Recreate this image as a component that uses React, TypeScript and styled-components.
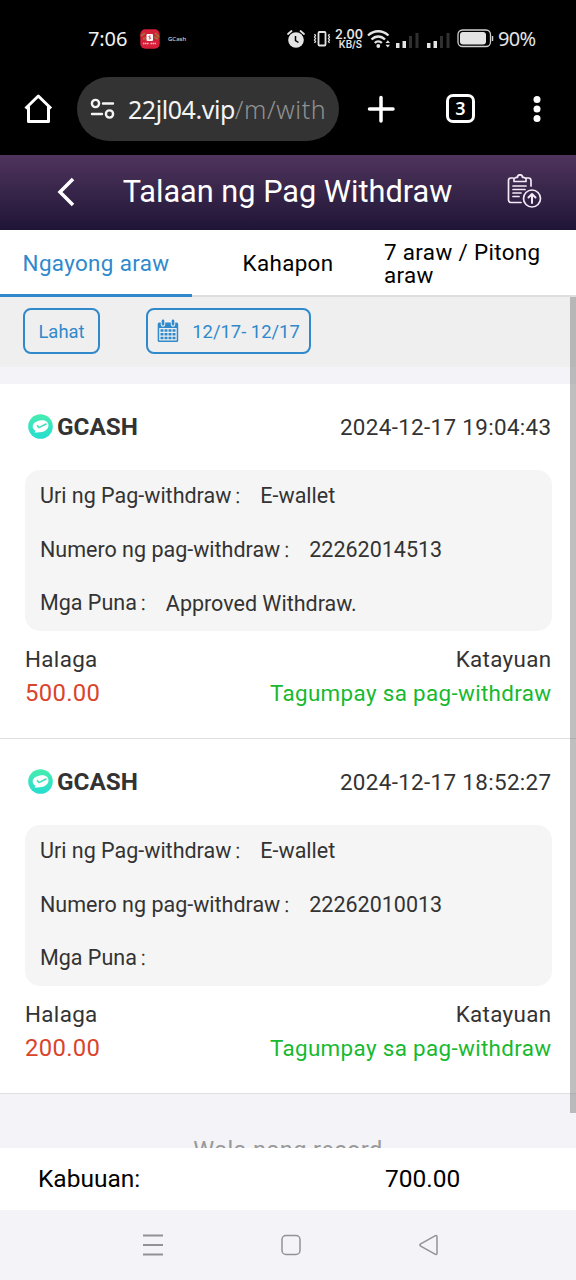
import React from "react";
import styled, { createGlobalStyle } from "styled-components";

const GlobalStyle = createGlobalStyle`
  * { box-sizing: border-box; }
  body {
    margin: 0;
    background: #f3f3f8;
    font-family: Roboto, "Noto Sans CJK SC", sans-serif;
  }
`;

const Screen = styled.div`
  width: 576px;
  height: 1280px;
  display: flex;
  flex-direction: column;
  overflow: hidden;
  white-space: nowrap;
`;

const Label = styled.span<{ $size: number; $track?: number; $color?: string; $weight?: number }>`
  font-size: ${(p) => p.$size}px;
  letter-spacing: ${(p) => p.$track ?? 0}px;
  color: ${(p) => p.$color ?? "#333"};
  font-weight: ${(p) => p.$weight ?? 400};
`;

/* System status bar */
const StatusBar = styled.div`
  height: 77px;
  flex: none;
  display: flex;
  align-items: center;
  padding: 0 40px 0 88px;
  background: #000;
  color: #e4e4e4;
  font-family: "Noto Sans", sans-serif;
`;

const Clock = styled.span`
  width: 52px;
  font-size: 20px;
  line-height: 24px;
  color: #f2f2f2;
  letter-spacing: -0.1px;
`;

const Notice = styled.span`
  margin-left: 8px;
  font-size: 6px;
  width: 118px;
`;

const VibrateIcon = styled.svg`
  margin-left: 7px;
`;

const Speed = styled.div`
  display: flex;
  flex-direction: column;
  align-items: flex-end;
  width: 31px;
  margin: 2px 4px 0 1px;
  font-family: Inter, sans-serif;
  font-weight: 600;
  font-size: 12.5px;
  line-height: 11px;
  span + span { font-size: 9.7px; line-height: 10px; margin-right: 1px; }
`;

const Signals = styled.div`
  display: flex;
  gap: 6px;
  margin: 2px 6px 0 4px;
`;

const Percent = styled.span`
  margin-left: 4px;
  font-size: 20px;
  line-height: 24px;
  letter-spacing: -0.7px;
`;

/* Browser toolbar */
const Toolbar = styled.div`
  height: 78px;
  flex: none;
  display: flex;
  align-items: flex-start;
  padding-left: 23px;
  background: #000;
  > svg { margin-top: 16px; }
`;

const Address = styled.div`
  width: 262px;
  height: 64px;
  margin: 0 26px 0 23px;
  padding: 0 12px 0 13px;
  border-radius: 32px;
  background: #333;
  display: flex;
  align-items: center;
  gap: 12px;
`;

const Url = styled.div`
  flex: 1;
  overflow: hidden;
  font-family: "Noto Sans", sans-serif;
  font-size: 25px;
  line-height: 36px;
  letter-spacing: -0.45px;
  color: #f4f4f4;
  span { color: #909090; font-weight: 300; letter-spacing: 0.6px; }
`;

const TabCount = styled.div`
  width: 29px;
  height: 29px;
  margin: 17px 57px 0 51px;
  border: 3px solid #fff;
  border-radius: 7px;
  color: #fff;
  font: 600 18px/23px "Noto Sans", sans-serif;
  text-align: center;
`;

/* Page */
const Header = styled.header`
  height: 75px;
  flex: none;
  display: flex;
  align-items: center;
  padding: 0 34px 2px 57px;
  background: linear-gradient(#4f345d, #1f1536);
`;

const Title = styled.h1`
  flex: 1;
  margin: 0;
  padding: 1px 6px 0 0;
  text-align: center;
  font-size: 30.7px;
  font-weight: 400;
  line-height: 40px;
  color: #fff;
`;

const Tabs = styled.nav`
  height: 67px;
  flex: none;
  display: flex;
  background: #fff;
`;

const Tab = styled.div<{ $active?: boolean; $wrap?: boolean }>`
  width: 192px;
  display: flex;
  align-items: center;
  justify-content: ${(p) => (p.$wrap ? "flex-start" : "center")};
  padding-top: ${(p) => (p.$active ? 3 : 2)}px;
  border-bottom: ${(p) => (p.$active ? "3px solid #3089cb" : "2px solid #dedede")};
  color: ${(p) => (p.$active ? "#3089cb" : "#000")};
  font-size: 22.4px;
  letter-spacing: 0.35px;
  line-height: 22.5px;
`;

const List = styled.main`
  position: relative;
  height: 851px;
  flex: none;
  overflow: hidden;
`;

const Scrollbar = styled.div`
  position: absolute;
  top: 0;
  right: 0;
  width: 6px;
  height: 816px;
  background: rgba(128, 128, 128, 0.5);
`;

const Filters = styled.div`
  height: 70px;
  margin-bottom: 17px;
  padding: 11px 23px 0;
  display: flex;
  gap: 46px;
  background: #efefef;
`;

const FilterButton = styled.div<{ $width: number }>`
  width: ${(p) => p.$width}px;
  height: 46px;
  display: flex;
  align-items: center;
  justify-content: center;
  gap: 13px;
  border: 2px solid #3089cb;
  border-radius: 8px;
  color: #3089cb;
  font-size: 18.4px;
`;

const Record = styled.section`
  height: 355px;
  padding: 0 24.5px 0 25px;
  background: #fff;
  border-bottom: 1px solid #dfdfe2;
`;

const Row = styled.div<{ $height: number }>`
  height: ${(p) => p.$height}px;
  display: flex;
  align-items: center;
  justify-content: space-between;
`;

const Brand = styled.div`
  display: flex;
  align-items: center;
  gap: 4px;
  padding-left: 3px;
`;

const Details = styled.dl`
  height: 161px;
  margin: 0 0 11px;
  padding: 0 15px;
  border-radius: 15px;
  background: #f5f5f5;
`;

const Detail = styled.div`
  height: 53.7px;
  display: flex;
  align-items: center;
  font-size: 21.5px;
  line-height: 30px;
  color: #333;
  dt, dd { margin: 0; }
  dd { margin-left: 9px; }
`;

const Colon = styled.span`
  margin-left: 2px;
  font-size: 18px;
  font-weight: 300;
`;

const Empty = styled.div`
  padding-top: 41px;
  text-align: center;
  font-size: 23.6px;
  line-height: 30px;
  letter-spacing: 0.4px;
  color: #999;
`;

const Total = styled.footer`
  height: 62px;
  flex: none;
  display: grid;
  grid-template-columns: 347px 1fr;
  align-items: center;
  padding: 0 0 2px 38px;
  background: #fff;
  font-size: 24.5px;
  color: #000;
`;

const SystemNav = styled.div`
  flex: 1;
  display: flex;
  gap: 116px;
  justify-content: center;
  align-items: center;
  padding-left: 6px;
`;

const Signal = () => (
  <svg width="25" height="18" viewBox="0 0 25 18">
    <path d="M1 12h3.5v5H1zM7.5 10H11v7H7.5z" fill="#e4e4e4" />
    <path d="M14 5h3v12h-3zM20.500 2h3v15h-3z" fill="#303030" />
  </svg>
);

const GcashMark = () => (
  <svg width="25" height="25" viewBox="0 0 25 25">
    <defs>
      <linearGradient id="mint" x2="0" y2="1">
        <stop stopColor="#48ecae" />
        <stop offset="1" stopColor="#25ddd0" />
      </linearGradient>
    </defs>
    <circle cx="12.5" cy="12.5" r="12.3" fill="url(#mint)" />
    <path d="M12 6.500c4-1 8.500.8 8.500 4.800 0 4.400-4.500 6.900-8.500 6.900-2 0-2.500.3-5.500.3l1-2C5.500 15.500 4.500 14 4.700 12 5 9 8.500 7 12 6.500z" fill="#fff" />
    <path d="M9 11.300l2 2.300 7.500-3.800" fill="none" stroke="#3de0b8" strokeWidth="1.600" />
  </svg>
);

const CalendarIcon = () => (
  <svg width="22" height="24" viewBox="0 0 22 24">
    <rect x=".7" y="3.500" width="20.500" height="19.500" rx="1.500" fill="#3089cb" />
    <path d="M2.200 9h17.500v12.500H2.200z" fill="#efefef" />
    <path d="M6 1.500v4M16 1.500v4" stroke="#efefef" strokeWidth="4.500" strokeLinecap="round" />
    <path d="M6 1.800v3.500M16 1.800v3.500" stroke="#3089cb" strokeWidth="2.600" strokeLinecap="round" />
    <path d="M3.500 11.500h15M3.500 15.300h15M3.500 19.100h15" stroke="#3089cb" strokeWidth="2.500" strokeDasharray="3 1" />
  </svg>
);

const records = [
  { time: "2024-12-17 19:04:43", number: "22262014513", note: "Approved Withdraw.", amount: "500.00" },
  { time: "2024-12-17 18:52:27", number: "22262010013", note: "", amount: "200.00" },
];

export default function App() {
  return (
    <Screen>
      <GlobalStyle />
      <StatusBar>
        <Clock>7:06</Clock>
        <svg width="20" height="20" viewBox="0 0 20 20">
          <rect x=".3" y=".3" width="19.400" height="19.400" rx="5" fill="#d51f38" />
          <path d="M1 7l4-3M15 4l4 4M3 10l3-1M14 8l4 2" stroke="#a36a38" strokeWidth="2" />
          <rect x="6.500" y="5" width="6.500" height="7" rx="1" fill="#fff" />
          <path d="M10.500 7c-2-.5-2 1.300-.7 1.500s1 1.800-1 1.300" fill="none" stroke="#d51f38" />
          <path d="M3 14.500h6M10.500 14.500h6" stroke="#ffb2b8" strokeWidth="1.500" strokeDasharray="1.500 .5" />
        </svg>
        <Notice>GCash</Notice>
        <svg width="20" height="20" viewBox="0 0 20 20">
          <circle cx="10" cy="11" r="7.800" fill="#e4e4e4" />
          <path d="M2 5l3.500-3M18 5l-3.500-3" stroke="#e4e4e4" strokeWidth="1.800" strokeLinecap="round" />
          <path d="M9.500 7v4.500l3 2" stroke="#000" strokeWidth="1.500" fill="none" />
        </svg>
        <VibrateIcon width="18" height="18" viewBox="0 0 18 18">
          <rect x="5.500" y="2" width="7" height="13.500" rx="1" fill="none" stroke="#e4e4e4" strokeWidth="1.800" />
          <path d="M1.500 4l1 1.500-1 1.500 1 1.500-1 1.500 1 1.500-1 1.500M16.500 4l-1 1.500 1 1.500-1 1.500 1 1.500-1 1.500 1 1.500" fill="none" stroke="#e4e4e4" strokeWidth="1.300" />
        </VibrateIcon>
        <Speed>
          <span>2.00</span>
          <span>KB/S</span>
        </Speed>
        <svg width="24" height="20" viewBox="0 0 24 20">
          <path d="M1 6.500C7 .8 15.500.8 21.500 6.500M4.500 10.500c4-4 9.500-4 13.500 0M7.800 14c2-2.200 5-2.200 7 0" fill="none" stroke="#e4e4e4" strokeWidth="2.300" />
          <circle cx="11.300" cy="17" r="1.900" fill="#e4e4e4" />
          <path d="M18.500 14l2.300-2.700L23 14zM18.500 15.800l2.300 2.700 2.200-2.700z" fill="#e4e4e4" />
        </svg>
        <Signals>
          <Signal />
          <Signal />
        </Signals>
        <svg width="37" height="19" viewBox="0 0 37 19">
          <rect x="1" y="1" width="32.500" height="16.500" rx="4.500" fill="none" stroke="#cfcfcf" strokeWidth="1.300" />
          <rect x="3" y="3" width="26" height="12.500" rx="3" fill="#e4e4e4" />
          <path d="M35.500 7v5" stroke="#cfcfcf" strokeWidth="1.500" />
        </svg>
        <Percent>90%</Percent>
      </StatusBar>

      <Toolbar>
        <svg width="31" height="32" viewBox="0 0 31 32" fill="none" stroke="#fff" strokeWidth="3">
          <path d="M2.500 15.500L15.300 3l12.800 12.500M5.500 13.500v15h20v-15" strokeLinejoin="round" />
        </svg>
        <Address>
          <svg width="26" height="22" viewBox="0 0 26 22" fill="none" stroke="#f4f4f4" strokeWidth="2.400">
            <circle cx="5.500" cy="5.500" r="3.600" />
            <circle cx="19.500" cy="16" r="3.600" />
            <path d="M13 5.500h10M2 16h10" strokeLinecap="round" />
          </svg>
          <Url>22jl04.vip<span>/m/withdraw</span></Url>
        </Address>
        <svg width="30" height="32" viewBox="0 0 30 32">
          <path d="M4.500 16h23.500M16 4.500v23.500" stroke="#fff" strokeWidth="3.500" strokeLinecap="round" />
        </svg>
        <TabCount>3</TabCount>
        <svg width="10" height="32" viewBox="0 0 10 32" fill="#fff">
          <circle cx="5" cy="6.500" r="3.500" />
          <circle cx="5" cy="16" r="3.500" />
          <circle cx="5" cy="25.500" r="3.500" />
        </svg>
      </Toolbar>

      <Header>
        <svg width="18" height="30" viewBox="0 0 18 30">
          <path d="M16 2L3 15l13 13" fill="none" stroke="#fff" strokeWidth="3.500" />
        </svg>
        <Title>Talaan ng Pag Withdraw</Title>
        <svg width="36" height="36" viewBox="0 0 36 36" fill="none" stroke="#f3eaf5" strokeWidth="1.700" strokeLinecap="round" strokeLinejoin="round">
          <path d="M7 4H5Q2.500 4 2.500 6.500V26Q2.500 28.500 5 28.500H15M20 4H22.500Q25 4 25 6.500V12" />
          <path d="M8 7.500V4.500l2.500-1.200h1C11.500 0 16.500 0 16.500 3.300h1L20 4.500v3z" />
          <path d="M7 12h13M7 15.500h12M7 19h8M7 22.500h6" />
          <circle cx="26" cy="24.500" r="8.500" />
          <path d="M26 29V20M22.500 23.500l3.500-3.500 3.500 3.500" strokeWidth="2" />
        </svg>
      </Header>

      <Tabs>
        <Tab $active>Ngayong araw</Tab>
        <Tab>Kahapon</Tab>
        <Tab $wrap>7 araw / Pitong<br />araw</Tab>
      </Tabs>

      <List>
        <Filters>
          <FilterButton $width={77}>Lahat</FilterButton>
          <FilterButton $width={165}>
            <CalendarIcon />
            <span>12/17- 12/17</span>
          </FilterButton>
        </Filters>
        {records.map((r) => (
          <Record key={r.time}>
            <Row $height={85.500}>
              <Brand>
                <GcashMark />
                <Label $size={24.300} $weight={700}>GCASH</Label>
              </Brand>
              <Label $size={22.400} $track={0.350}>{r.time}</Label>
            </Row>
            <Details>
              <Detail><dt>Uri ng Pag-withdraw<Colon>：</Colon></dt><dd>E-wallet</dd></Detail>
              <Detail><dt>Numero ng pag-withdraw<Colon>：</Colon></dt><dd>{r.number}</dd></Detail>
              <Detail><dt>Mga Puna<Colon>：</Colon></dt><dd>{r.note}</dd></Detail>
            </Details>
            <Row $height={34}>
              <Label $size={22.400} $track={0.350}>Halaga</Label>
              <Label $size={22.400} $track={0.350}>Katayuan</Label>
            </Row>
            <Row $height={34}>
              <Label $size={23.800} $track={0.350} $color="#d9442a">{r.amount}</Label>
              <Label $size={22.400} $track={0.350} $color="#17b92f">Tagumpay sa pag-withdraw</Label>
            </Row>
          </Record>
        ))}
        <Empty>Wala nang record</Empty>
        <Scrollbar />
      </List>

      <Total>
        <span>Kabuuan:</span>
        <span>700.00</span>
      </Total>

      <SystemNav>
        <svg width="22" height="24" viewBox="0 0 22 24">
          <path d="M1 2.500h20M1 12h20M1 21.500h20" stroke="#929296" strokeWidth="1.800" />
        </svg>
        <svg width="22" height="24" viewBox="0 0 22 24">
          <rect x="2" y="2.500" width="18" height="19" rx="4" fill="none" stroke="#929296" strokeWidth="1.500" />
        </svg>
        <svg width="22" height="24" viewBox="0 0 22 24">
          <path d="M2.700 10.800L17 2.800Q19 1.800 19 4V20Q19 22.200 17 21.200L2.700 13.200Q1 12 2.700 10.800Z" fill="none" stroke="#929296" strokeWidth="1.500" />
        </svg>
      </SystemNav>
    </Screen>
  );
}
